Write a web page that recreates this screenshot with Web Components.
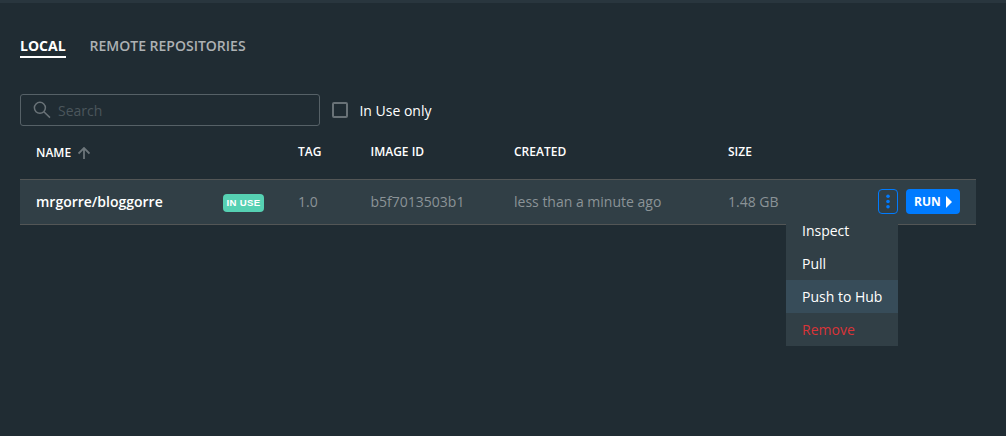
<!DOCTYPE html>
<html lang="en">
<head>
<meta charset="utf-8">
<title>Images</title>
<style>
html,body{margin:0;height:100%;overflow:hidden;background:#202c33}
body{font-family:"Open Sans",sans-serif;font-size:14px;color:#fff}
</style>
</head>
<body>
<image-page></image-page>
<script>
const define = (name, css, html) => customElements.define(name, class extends HTMLElement {
  constructor() {
    super();
    this.attachShadow({mode: 'open'}).innerHTML = `<style>*{box-sizing:border-box}${css}</style>${html}`;
  }
});

define('nav-tab', `
:host{display:block;height:22px;line-height:20px;font-weight:600;color:#adb1b3;white-space:nowrap}
:host([active]){font-weight:700;color:#fff;border-bottom:2px solid #fff}`, `<slot></slot>`);

define('search-field', `
:host{display:flex;box-sizing:border-box;align-items:center;width:300px;height:32px;border:1px solid #566167;border-radius:3px;padding-left:12px;color:#4b565c}
svg{margin-right:7px;flex:none}`, `
<svg width="18" height="18" viewBox="0 0 18 18" fill="none" stroke="#6a7378" stroke-width="1.5"><circle cx="6.9" cy="6.8" r="5.5"/><path d="M10.9 10.7L17 16.6"/></svg><span><slot></slot></span>`);

define('check-option', `
:host{display:flex;align-items:center;white-space:nowrap}
i{width:16px;height:16px;border:2px solid #697277;border-radius:2px;margin-right:11px}`, `<i></i><span><slot></slot></span>`);

define('table-row', `
:host{display:grid;box-sizing:border-box;grid-template-columns:262px 72.5px 143.5px 214px 1fr;align-items:center;height:46px;padding:0 16px 2px;color:#8b9397;white-space:nowrap;background:#313f46;border-top:1px solid #535656;border-bottom:1px solid #535656}
:host([head]){height:53px;background:none;border:0;font-size:12px;font-weight:600;color:#fff}`, `<slot></slot>`);

define('name-cell', `
:host{display:flex;align-items:center;justify-content:space-between;padding-right:34px;color:#fff;font-weight:600}`, `<slot></slot>`);

define('sort-label', `
:host{display:flex;align-items:center;gap:7px;padding-top:1px}
svg{margin-top:2px}`, `
<slot></slot><svg width="12" height="12" viewBox="0 0 12 12" fill="none" stroke="#6d767b" stroke-width="1.8"><path d="M6 12V1.2M.5 6.5L6 1l5.5 5.5"/></svg>`);

define('status-badge', `
:host{display:block;width:41px;height:18px;margin-top:3px;border-radius:4px;background:#56d1b3;color:#fff;font:700 9.6px/18px "Liberation Sans",sans-serif;letter-spacing:.3px;text-align:center}`, `<slot></slot>`);

define('more-button', `
:host{display:flex;box-sizing:border-box;width:20px;height:25px;border:1px solid #007bff;border-radius:4px;align-items:center;justify-content:center}`, `
<svg width="4" height="15" viewBox="0 0 4 15" fill="#007bff"><circle cx="2" cy="2.2" r="1.8"/><circle cx="2" cy="7.5" r="1.8"/><circle cx="2" cy="12.8" r="1.8"/></svg>`);

define('run-button', `
:host{display:flex;box-sizing:border-box;width:54px;height:25px;border-radius:4px;background:#007bff;color:#fff;font-size:12px;font-weight:700;align-items:center;padding-left:8px;gap:5px}
svg{margin-top:1px}`, `
<span><slot></slot></span><svg width="6" height="12" viewBox="0 0 6 12" fill="#fff"><path d="M0 0L6 6L0 12Z"/></svg>`);

define('row-actions', `
:host{display:flex;align-items:center;justify-content:flex-end;gap:8px;position:relative}
.menu{position:absolute;right:62px;top:25px}`, `
<more-button></more-button><run-button>RUN</run-button><div class="menu"><slot></slot></div>`);

define('context-menu', `
:host{display:block;width:112px;background:#313f46}`, `<slot></slot>`);

define('menu-item', `
:host{display:block;height:33px;line-height:33px;padding-left:16px;color:#fff}
:host([active]){background:#374c59}
:host([danger]){color:#d93438}`, `<slot></slot>`);

define('image-page', `
:host{display:block;box-sizing:border-box;height:436px;border-top:3px solid #29363e;padding:33px 30px 0 20px}
nav{display:flex;gap:24px}
.filters{display:flex;align-items:center;gap:12.4px;margin-top:36px}
.size{display:flex;justify-content:space-between;align-items:center}`, `
<nav><nav-tab active>LOCAL</nav-tab><nav-tab>REMOTE REPOSITORIES</nav-tab></nav>
<div class="filters"><search-field>Search</search-field><check-option>In Use only</check-option></div>
<table-row head><sort-label>NAME</sort-label><span>TAG</span><span>IMAGE ID</span><span>CREATED</span><span>SIZE</span></table-row>
<table-row><name-cell><span>mrgorre/bloggorre</span><status-badge>IN USE</status-badge></name-cell><span>1.0</span><span>b5f7013503b1</span><span>less than a minute ago</span><div class="size"><span>1.48 GB</span><row-actions><context-menu><menu-item>Inspect</menu-item><menu-item>Pull</menu-item><menu-item active>Push to Hub</menu-item><menu-item danger>Remove</menu-item></context-menu></row-actions></div></table-row>`);
</script>
</body>
</html>
